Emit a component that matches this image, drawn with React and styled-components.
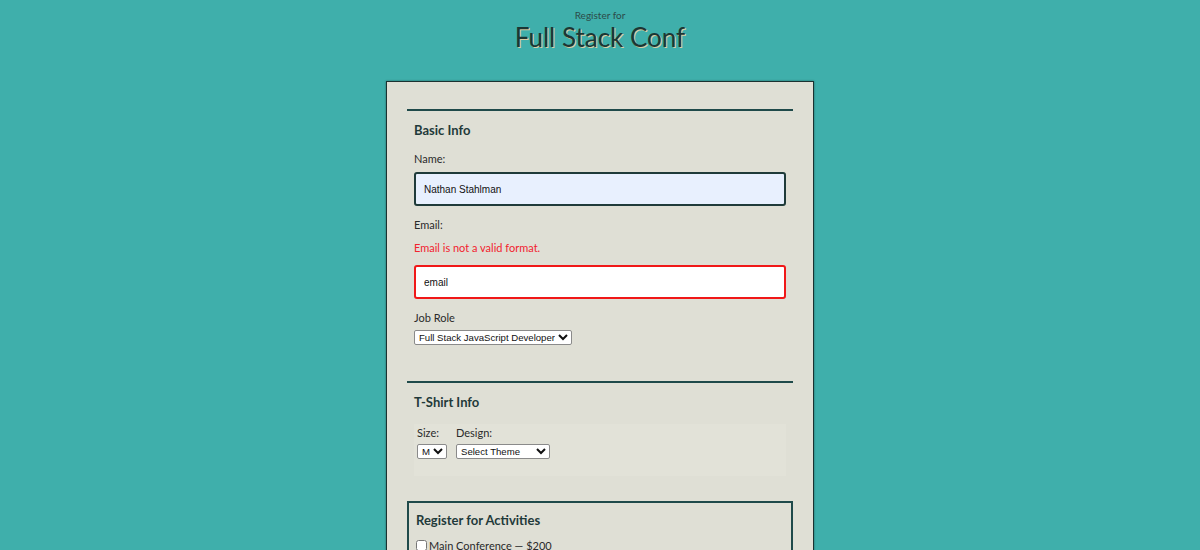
import styled, { createGlobalStyle } from 'styled-components';

const GlobalStyle = createGlobalStyle`
   body {
      margin: 0;
      background-color: #3fafab;
      font-family: Lato, "Noto Sans", sans-serif;
      color: #1c3634;
   }
`;

const App = () => {
   return (
      <>
         <GlobalStyle />
         <Header>
            <span>Register for</span>
            <h1>Full Stack Conf</h1>
         </Header>

         <Form>
            <Fieldset $pb="12px">
               <Legend>Basic Info</Legend>
               <Label>Name:</Label>
               <TextInput type="text" defaultValue="Nathan Stahlman" $autofill />

               <Label>Email:</Label>
               <ErrorText>Email is not a valid format.</ErrorText>
               <TextInput type="text" defaultValue="email" $invalid />

               <Label $tight>Job Role</Label>
               <Select defaultValue="fs">
                  <option value="fs">Full Stack JavaScript Developer</option>
               </Select>
            </Fieldset>

            <Fieldset $pb="1px">
               <Legend>T-Shirt Info</Legend>
               <ShirtBox>
                  <ShirtField>
                     <Label $tight>Size:</Label>
                     <Select defaultValue="M">
                        <option value="S">S</option>
                        <option value="M">M</option>
                        <option value="L">L</option>
                     </Select>
                  </ShirtField>
                  <ShirtField>
                     <Label $tight>Design:</Label>
                     <Select defaultValue="" $width="94px">
                        <option value="">Select Theme</option>
                     </Select>
                  </ShirtField>
               </ShirtBox>
            </Fieldset>

            <Fieldset $boxed $pb="20px">
               <Legend $mb="11px">Register for Activities</Legend>
               <Activity>
                  <input type="checkbox" />
                  Main Conference — $200
               </Activity>
               <Activity>
                  <input type="checkbox" />
                  JavaScript Frameworks Workshop — Tuesday 9am-12pm, $100
               </Activity>
            </Fieldset>
         </Form>
      </>
   );
};

const Header = styled.header`
   text-align: center;
   padding-top: 9px;

   span {
      display: block;
      font-size: 10px;
      color: #2c4b49;
      line-height: 12px;
   }

   h1 {
      margin: 0;
      font-size: 26px;
      font-weight: 400;
      line-height: 32px;
      color: #1c3634;
      text-shadow: 1px 1px 0 #d9cfa4;
   }
`;

const Form = styled.form`
   width: 386px;
   margin: 28px auto 0;
   padding: 27px 20px 0;
   background-color: #dfdfd5;
   border: 1px solid #1b3231;
   border-bottom: none;
   box-shadow: 0 0 2px rgba(0, 0, 0, 0.4);
`;

const Fieldset = styled.fieldset`
   margin: 0 0 ${(p) => (p.$boxed ? '0' : '24px')};
   padding: 8px 7px ${(p) => p.$pb};
   border: none;
   border-top: 2px solid #1f4a4a;
   ${(p) => p.$boxed && `border: 2px solid #1f4a4a; padding-top: 6px;`}
`;

const Legend = styled.h2`
   margin: 3px 0 ${(p) => p.$mb || '14px'};
   font-size: 13px;
   font-weight: 700;
   color: #1f3a3a;
`;

const Label = styled.label`
   display: block;
   font-size: 11px;
   line-height: 14px;
   color: #2a2a2a;
   margin-bottom: ${(p) => (p.$tight ? '0' : '6px')};
`;

const ErrorText = styled.p`
   margin: 9px 0 10px;
   font-size: 11px;
   line-height: 14px;
   color: #f2222e;
`;

const TextInput = styled.input`
   display: block;
   box-sizing: border-box;
   width: 100%;
   height: 34px;
   margin: 0 0 12px;
   padding: 0 8px;
   font-family: "Liberation Sans", Arial, sans-serif;
   font-size: 10px;
   color: #111;
   border-radius: 3px;
   border: 2px solid ${(p) => (p.$invalid ? '#f01818' : '#1f3b3a')};
   background-color: ${(p) => (p.$autofill ? '#e8f0fe' : '#fff')};
   outline: none;
`;

const Select = styled.select`
   box-sizing: border-box;
   font-family: "Liberation Sans", Arial, sans-serif;
   font-size: 9.6px;
   height: 15px;
   padding: 0;
   color: #111;
   background: #fff;
   border: 1px solid #8a8a8a;
   border-radius: 2px;
   width: ${(p) => p.$width || 'auto'};
`;

const ShirtBox = styled.div`
   display: flex;
   gap: 9px;
   margin-top: 14px;
   padding: 2px 3px 17px;
   background-color: #e2e2d8;

   label {
      margin-bottom: 4px;
   }
`;

const ShirtField = styled.div`
   display: flex;
   flex-direction: column;
   align-items: flex-start;
`;

const Activity = styled.label`
   display: flex;
   align-items: center;
   gap: 2px;
   font-size: 11px;
   color: #2a2a2a;
   margin-bottom: 8px;

   input {
      margin: 0;
      width: 11px;
      height: 11px;
   }
`;

export default App;
